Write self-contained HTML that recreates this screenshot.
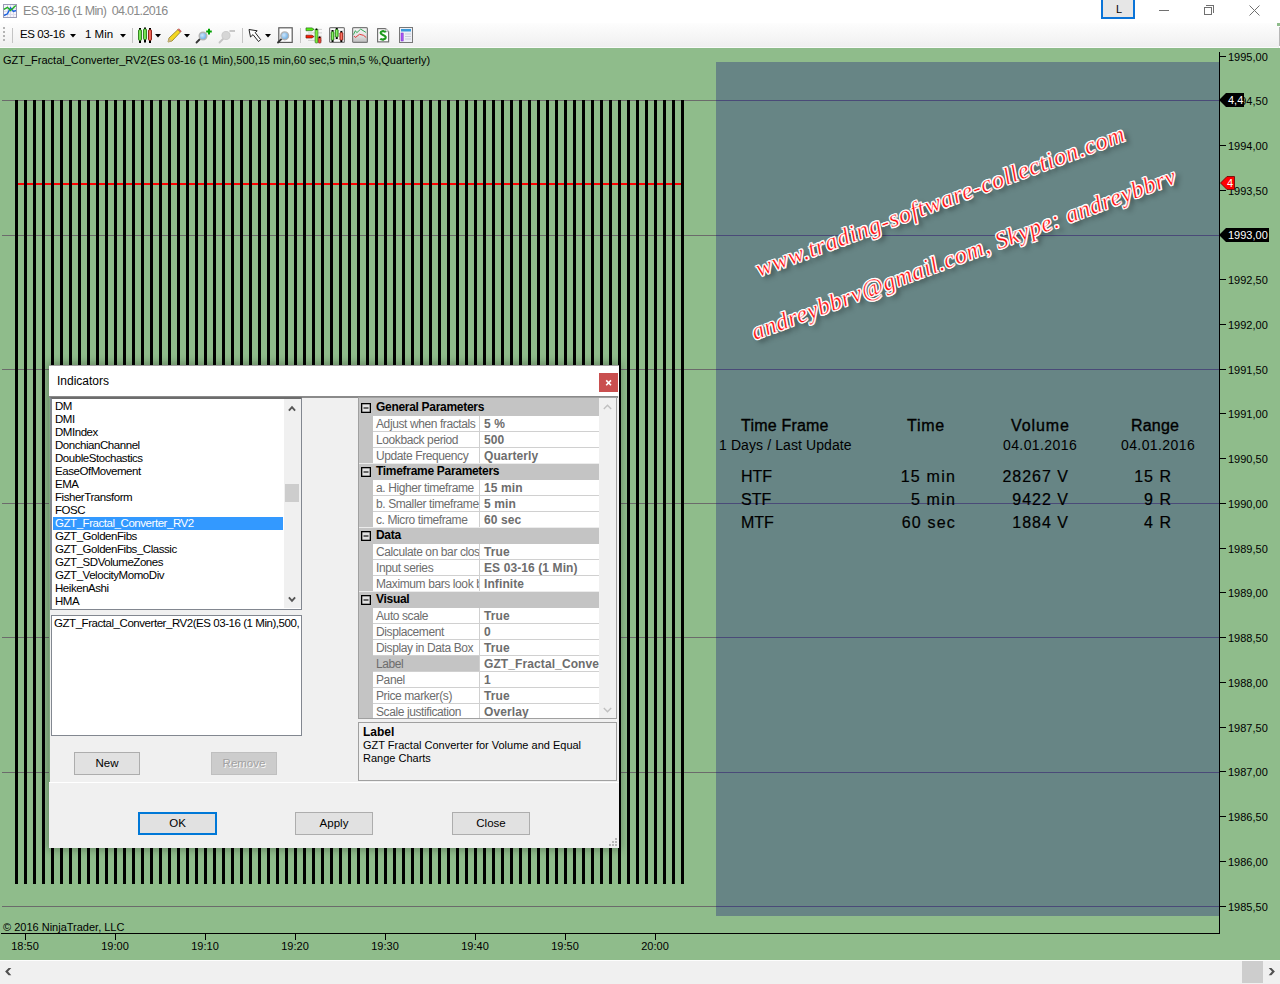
<!DOCTYPE html><html><head><meta charset="utf-8"><style>
*{margin:0;padding:0;box-sizing:border-box}
html,body{width:1280px;height:984px;overflow:hidden;background:#fff;font-family:"Liberation Sans", sans-serif;position:relative}
.a{position:absolute}
.t{position:absolute;white-space:pre;line-height:1}
</style></head><body><div class="a" style="left:0;top:0;width:1280px;height:22px;background:#fff"></div>
<svg class="a" style="left:3px;top:4px" width="14" height="14" viewBox="0 0 14 14">
<rect x="0.5" y="0.5" width="13" height="13" fill="#f6f4fc" stroke="#9a9cb6"/>
<path d="M1 4.5H13M1 7.5H13M1 10.5H13M4.5 1V13M7.5 1V13M10.5 1V13" stroke="#dcdcea" stroke-width="1"/>
<path d="M1 11.5 L4.5 9.8 L6 6.6 L7.5 3.8 L10.4 7.4 L13 6.5" stroke="#1a62e0" stroke-width="1.4" fill="none"/>
<path d="M0.9 5.4 L4.5 3.3 L7.5 6.5 L12.8 1.4" stroke="#20b020" stroke-width="1.4" fill="none"/>
</svg>
<div class="t" style="left:23px;top:5.4px;font-size:12.5px;letter-spacing:-0.7px;color:#8a8a8a">ES 03-16 (1 Min)  04.01.2016</div>
<div class="a" style="left:1101px;top:-2px;width:34px;height:21px;border:2px solid #0a74d8;background:#e6e6e6"></div>
<div class="t" style="left:1116px;top:4px;font-size:11px;color:#000">L</div>
<div class="a" style="left:1159px;top:10px;width:10px;height:1px;background:#707070"></div>
<div class="a" style="left:1204px;top:7px;width:8px;height:8px;border:1px solid #707070"></div>
<div class="a" style="left:1206px;top:5px;width:8px;height:8px;border-top:1px solid #707070;border-right:1px solid #707070"></div>
<svg class="a" style="left:1249px;top:5px" width="11" height="11"><path d="M0.5 0.5L10.5 10.5M10.5 0.5L0.5 10.5" stroke="#707070" stroke-width="1"/></svg>
<div class="a" style="left:0;top:23px;width:1279px;height:25px;background:linear-gradient(#fdfdfd,#f5f5f5 60%,#eeeeee);border-top-left-radius:3px"></div>
<div class="a" style="left:0;top:47px;width:1278px;height:1px;background:#fafafa"></div>
<div class="a" style="left:1279px;top:27px;width:1px;height:19px;background:#b8b8b8"></div>
<div class="a" style="left:1277px;top:23px;width:3px;height:3px;background:#8fbc8b"></div>
<div class="a" style="left:3px;top:27px;width:2px;height:2px;background:#b4b4b4"></div>
<div class="a" style="left:3px;top:31px;width:2px;height:2px;background:#b4b4b4"></div>
<div class="a" style="left:3px;top:35px;width:2px;height:2px;background:#b4b4b4"></div>
<div class="a" style="left:3px;top:39px;width:2px;height:2px;background:#b4b4b4"></div>
<div class="a" style="left:12px;top:28px;width:1px;height:15px;background:#c4c4c4"></div>
<div class="a" style="left:132px;top:28px;width:1px;height:15px;background:#c4c4c4"></div>
<div class="a" style="left:242px;top:28px;width:1px;height:15px;background:#c4c4c4"></div>
<div class="a" style="left:300px;top:28px;width:1px;height:15px;background:#c4c4c4"></div>
<div class="t" style="left:20px;top:29px;font-size:11.5px;letter-spacing:-0.4px;color:#000">ES 03-16</div>
<div class="t" style="left:85px;top:29px;font-size:11.5px;color:#000">1 Min</div>
<svg class="a" style="left:70px;top:34px" width="6" height="4"><path d="M0 0H6L3 3.5Z" fill="#000"/></svg>
<svg class="a" style="left:120px;top:34px" width="6" height="4"><path d="M0 0H6L3 3.5Z" fill="#000"/></svg>
<svg class="a" style="left:154.5px;top:34px" width="6" height="4"><path d="M0 0H6L3 3.5Z" fill="#000"/></svg>
<svg class="a" style="left:184px;top:34px" width="6" height="4"><path d="M0 0H6L3 3.5Z" fill="#000"/></svg>
<svg class="a" style="left:265px;top:34px" width="6" height="4"><path d="M0 0H6L3 3.5Z" fill="#000"/></svg>
<svg class="a" style="left:137px;top:27px" width="16" height="17" viewBox="0 0 16 17">
<defs><linearGradient id="cg" x1="0" x2="1"><stop offset="0" stop-color="#3fc21a"/><stop offset="0.45" stop-color="#8ef56a"/><stop offset="1" stop-color="#3fbf1a"/></linearGradient>
<linearGradient id="cr" x1="0" x2="1"><stop offset="0" stop-color="#e02a1a"/><stop offset="0.45" stop-color="#ff8a7a"/><stop offset="1" stop-color="#d8281a"/></linearGradient></defs>
<path d="M3 1V16M8 0.5V15.5M13 1V16" stroke="#000" stroke-width="2"/>
<rect x="1.5" y="2.8" width="3" height="10.5" rx="0.8" fill="url(#cg)" stroke="#2a7a1a" stroke-width="0.9"/>
<rect x="6.5" y="2" width="3" height="10.5" rx="0.8" fill="url(#cg)" stroke="#2a7a1a" stroke-width="0.9"/>
<rect x="11.5" y="2.8" width="3" height="10.5" rx="0.8" fill="url(#cr)" stroke="#8a1a10" stroke-width="0.9"/>
</svg>
<svg class="a" style="left:167px;top:28px" width="15" height="15" viewBox="0 0 15 15">
<path d="M1 14 L2 10 L11 1.5 L13.5 4 L5 13 Z" fill="#f5d820" stroke="#8a7a20" stroke-width="0.8"/>
<path d="M11 1.5 L13.5 4 L14.3 3.2 L11.8 0.7Z" fill="#e66" stroke="#a44" stroke-width="0.6"/>
<path d="M1 14 L2 10 L5 13Z" fill="#c9b48a"/>
</svg>
<svg class="a" style="left:195px;top:28px" width="18" height="16" viewBox="0 0 18 16">
<defs><radialGradient id="mg" cx="0.4" cy="0.4" r="0.6"><stop offset="0" stop-color="#cfe6fb"/><stop offset="1" stop-color="#6aaee6"/></radialGradient></defs>
<line x1="1.5" y1="14.5" x2="5" y2="11" stroke="#333" stroke-width="1.8" stroke-linecap="round"/>
<circle cx="8" cy="8" r="3.8" fill="url(#mg)" stroke="#b4b4b4" stroke-width="1.4"/>
<path d="M14 0.8V6.4M11.2 3.6H16.8" stroke="#00a000" stroke-width="2"/>
</svg>
<svg class="a" style="left:218px;top:28px" width="18" height="16" viewBox="0 0 18 16">
<line x1="1.5" y1="14.5" x2="5" y2="11" stroke="#c4c4c4" stroke-width="1.8" stroke-linecap="round"/>
<circle cx="8" cy="7.5" r="4" fill="#d6d6d6" stroke="#cdcdcd" stroke-width="1.2"/>
<path d="M11.5 3H17" stroke="#c8c8c8" stroke-width="2"/>
</svg>
<svg class="a" style="left:247px;top:28px" width="16" height="16" viewBox="0 0 16 16">
<path d="M2 1.5 L3.5 9 L6 6.6 L11.6 13.6 L13.6 11.6 L8.2 4.6 L10.2 2.8 Z" fill="#fff" stroke="#222" stroke-width="1" stroke-linejoin="round"/>
</svg>
<svg class="a" style="left:277px;top:27px" width="16" height="17" viewBox="0 0 16 17">
<rect x="1.8" y="0.8" width="13.4" height="14.6" fill="#fff" stroke="#5a5a5a" stroke-width="1.2"/>
<line x1="1" y1="15.5" x2="4.8" y2="11.7" stroke="#333" stroke-width="1.8" stroke-linecap="round"/>
<circle cx="7.7" cy="8.8" r="3.9" fill="url(#mg)" stroke="#b4b4b4" stroke-width="1.4"/>
</svg>
<svg class="a" style="left:305px;top:27px" width="17" height="17" viewBox="0 0 17 17">
<path d="M9 2.4H17M3 5.9H17M9 9.3H17M3 13.4H17" stroke="#cfcfcf" stroke-width="1"/>
<path d="M1 0.9H7L9 2.3L7 3.7H1Z" fill="#55ee11" stroke="#2a6a1a" stroke-width="0.7"/>
<path d="M1 8.2H7L9 9.6L7 11H1Z" fill="#ff1a00" stroke="#6a1a10" stroke-width="0.7"/>
<rect x="10.1" y="2" width="2.8" height="14" rx="1" fill="#7af03a" stroke="#3a7a2a" stroke-width="0.7"/>
<rect x="13.3" y="10" width="2.7" height="6" rx="0.8" fill="#f24a3a" stroke="#7a2a20" stroke-width="0.7"/>
<circle cx="11.5" cy="2.3" r="0.9" fill="#000"/><circle cx="14.6" cy="10.3" r="0.9" fill="#000"/>
</svg>
<svg class="a" style="left:329px;top:27px" width="16" height="16" viewBox="0 0 16 16">
<rect x="0.6" y="0.6" width="14.8" height="14.8" rx="1" fill="#fafafa" stroke="#7a7a7a" stroke-width="1.2"/>
<path d="M1.5 3.5H14.5M1.5 6.5H14.5M1.5 9.5H14.5M1.5 12.5H14.5" stroke="#c8c8c8" stroke-width="0.8" stroke-dasharray="1 1"/>
<path d="M3.55 3V15M7.75 1V12M12.35 4V15" stroke="#000" stroke-width="2"/>
<rect x="2.2" y="4.7" width="2.7" height="8.4" rx="0.8" fill="url(#cg)" stroke="#2a7a1a" stroke-width="0.7"/>
<rect x="6.3" y="2.5" width="2.9" height="7.5" rx="0.8" fill="url(#cg)" stroke="#2a7a1a" stroke-width="0.7"/>
<rect x="10.9" y="5.6" width="2.9" height="7.5" rx="0.8" fill="url(#cr)" stroke="#8a1a10" stroke-width="0.7"/>
</svg>
<svg class="a" style="left:352px;top:27px" width="16" height="16" viewBox="0 0 16 16">
<defs><linearGradient id="g1" x1="0" y1="0" x2="0" y2="1"><stop offset="0" stop-color="#f6f6f6"/><stop offset="0.5" stop-color="#e4e4e4"/><stop offset="1" stop-color="#bdbdbd"/></linearGradient></defs>
<rect x="0.6" y="0.6" width="14.8" height="14.8" rx="1" fill="url(#g1)" stroke="#7a7a7a" stroke-width="1.2"/>
<path d="M1.5 7.6 L3.4 3.7 L4.8 5.7 L8.7 2.1 L13.9 5.4" stroke="#3aaa5a" stroke-width="1" fill="none"/>
<path d="M2.2 9 L3.4 10.5 L7.5 7.3 L11.5 8.3 L14.2 10.5" stroke="#e23a3a" stroke-width="1" fill="none"/>
</svg>
<svg class="a" style="left:377px;top:28px" width="13" height="15" viewBox="0 0 13 15">
<path d="M0.6 0.6H8.6L11.6 3.6V13.9H0.6Z" fill="#fff" stroke="#707070" stroke-width="1.2" stroke-linejoin="round"/>
<path d="M8.6 0.6V3.6H11.6" fill="#e8e8e8" stroke="#9a9a9a" stroke-width="0.6"/>
<path d="M8.6 4.4 C8 2.9 3.6 2.6 3.6 5.1 C3.6 7.3 8.7 6.6 8.7 9.3 C8.7 11.9 4.2 11.9 3.3 10.6" stroke="#1e9a1e" stroke-width="2.1" fill="none"/>
<path d="M6.1 2.2V3.4M6.1 11.2V12.4" stroke="#1e9a1e" stroke-width="1.6"/>
</svg>
<svg class="a" style="left:399px;top:27px" width="14" height="16" viewBox="0 0 14 16">
<rect x="0.5" y="0.5" width="13" height="15" fill="#eef0f6" stroke="#777"/>
<rect x="2" y="2" width="10" height="2.5" fill="#3a9ad9"/>
<rect x="2" y="6" width="2.2" height="8" fill="#a855f7" stroke="#7733bb" stroke-width="0.5"/>
<path d="M6 7H12M6 9.5H12M6 12H12" stroke="#c8ccd8" stroke-width="1"/>
</svg>
<div class="a" style="left:0;top:48px;width:1280px;height:912px;background:#8fbc8b"></div>
<div class="t" style="left:3px;top:55px;font-size:11px;color:#000">GZT_Fractal_Converter_RV2(ES 03-16 (1 Min),500,15 min,60 sec,5 min,5 %,Quarterly)</div>
<div class="a" style="left:716px;top:62px;width:503px;height:854px;background:#678585"></div>
<div class="a" style="left:2px;top:100px;width:714px;height:1px;background:#6b6b6b"></div>
<div class="a" style="left:716px;top:100px;width:503px;height:1px;background:#4a4a78"></div>
<div class="a" style="left:2px;top:235px;width:714px;height:1px;background:#6b6b6b"></div>
<div class="a" style="left:716px;top:235px;width:503px;height:1px;background:#4a4a78"></div>
<div class="a" style="left:2px;top:369px;width:714px;height:1px;background:#6b6b6b"></div>
<div class="a" style="left:716px;top:369px;width:503px;height:1px;background:#4a4a78"></div>
<div class="a" style="left:2px;top:503px;width:714px;height:1px;background:#6b6b6b"></div>
<div class="a" style="left:716px;top:503px;width:503px;height:1px;background:#4a4a78"></div>
<div class="a" style="left:2px;top:637px;width:714px;height:1px;background:#6b6b6b"></div>
<div class="a" style="left:716px;top:637px;width:503px;height:1px;background:#4a4a78"></div>
<div class="a" style="left:2px;top:772px;width:714px;height:1px;background:#6b6b6b"></div>
<div class="a" style="left:716px;top:772px;width:503px;height:1px;background:#4a4a78"></div>
<div class="a" style="left:2px;top:906px;width:714px;height:1px;background:#6b6b6b"></div>
<div class="a" style="left:716px;top:906px;width:503px;height:1px;background:#4a4a78"></div>
<div class="a" style="left:17px;top:183px;width:665px;height:2px;background:#ff0000"></div>
<div class="a" style="left:15px;top:100px;width:3px;height:784px;background:#000"></div><div class="a" style="left:24px;top:100px;width:3px;height:784px;background:#000"></div><div class="a" style="left:33px;top:100px;width:3px;height:784px;background:#000"></div><div class="a" style="left:42px;top:100px;width:3px;height:784px;background:#000"></div><div class="a" style="left:51px;top:100px;width:3px;height:784px;background:#000"></div><div class="a" style="left:60px;top:100px;width:3px;height:784px;background:#000"></div><div class="a" style="left:69px;top:100px;width:3px;height:784px;background:#000"></div><div class="a" style="left:78px;top:100px;width:3px;height:784px;background:#000"></div><div class="a" style="left:87px;top:100px;width:3px;height:784px;background:#000"></div><div class="a" style="left:96px;top:100px;width:3px;height:784px;background:#000"></div><div class="a" style="left:105px;top:100px;width:3px;height:784px;background:#000"></div><div class="a" style="left:114px;top:100px;width:3px;height:784px;background:#000"></div><div class="a" style="left:123px;top:100px;width:3px;height:784px;background:#000"></div><div class="a" style="left:132px;top:100px;width:3px;height:784px;background:#000"></div><div class="a" style="left:141px;top:100px;width:3px;height:784px;background:#000"></div><div class="a" style="left:150px;top:100px;width:3px;height:784px;background:#000"></div><div class="a" style="left:159px;top:100px;width:3px;height:784px;background:#000"></div><div class="a" style="left:168px;top:100px;width:3px;height:784px;background:#000"></div><div class="a" style="left:177px;top:100px;width:3px;height:784px;background:#000"></div><div class="a" style="left:186px;top:100px;width:3px;height:784px;background:#000"></div><div class="a" style="left:195px;top:100px;width:3px;height:784px;background:#000"></div><div class="a" style="left:204px;top:100px;width:3px;height:784px;background:#000"></div><div class="a" style="left:213px;top:100px;width:3px;height:784px;background:#000"></div><div class="a" style="left:222px;top:100px;width:3px;height:784px;background:#000"></div><div class="a" style="left:231px;top:100px;width:3px;height:784px;background:#000"></div><div class="a" style="left:240px;top:100px;width:3px;height:784px;background:#000"></div><div class="a" style="left:249px;top:100px;width:3px;height:784px;background:#000"></div><div class="a" style="left:258px;top:100px;width:3px;height:784px;background:#000"></div><div class="a" style="left:267px;top:100px;width:3px;height:784px;background:#000"></div><div class="a" style="left:276px;top:100px;width:3px;height:784px;background:#000"></div><div class="a" style="left:285px;top:100px;width:3px;height:784px;background:#000"></div><div class="a" style="left:294px;top:100px;width:3px;height:784px;background:#000"></div><div class="a" style="left:303px;top:100px;width:3px;height:784px;background:#000"></div><div class="a" style="left:312px;top:100px;width:3px;height:784px;background:#000"></div><div class="a" style="left:321px;top:100px;width:3px;height:784px;background:#000"></div><div class="a" style="left:330px;top:100px;width:3px;height:784px;background:#000"></div><div class="a" style="left:339px;top:100px;width:3px;height:784px;background:#000"></div><div class="a" style="left:348px;top:100px;width:3px;height:784px;background:#000"></div><div class="a" style="left:357px;top:100px;width:3px;height:784px;background:#000"></div><div class="a" style="left:366px;top:100px;width:3px;height:784px;background:#000"></div><div class="a" style="left:375px;top:100px;width:3px;height:784px;background:#000"></div><div class="a" style="left:384px;top:100px;width:3px;height:784px;background:#000"></div><div class="a" style="left:393px;top:100px;width:3px;height:784px;background:#000"></div><div class="a" style="left:402px;top:100px;width:3px;height:784px;background:#000"></div><div class="a" style="left:411px;top:100px;width:3px;height:784px;background:#000"></div><div class="a" style="left:420px;top:100px;width:3px;height:784px;background:#000"></div><div class="a" style="left:429px;top:100px;width:3px;height:784px;background:#000"></div><div class="a" style="left:438px;top:100px;width:3px;height:784px;background:#000"></div><div class="a" style="left:447px;top:100px;width:3px;height:784px;background:#000"></div><div class="a" style="left:456px;top:100px;width:3px;height:784px;background:#000"></div><div class="a" style="left:465px;top:100px;width:3px;height:784px;background:#000"></div><div class="a" style="left:474px;top:100px;width:3px;height:784px;background:#000"></div><div class="a" style="left:483px;top:100px;width:3px;height:784px;background:#000"></div><div class="a" style="left:492px;top:100px;width:3px;height:784px;background:#000"></div><div class="a" style="left:501px;top:100px;width:3px;height:784px;background:#000"></div><div class="a" style="left:510px;top:100px;width:3px;height:784px;background:#000"></div><div class="a" style="left:519px;top:100px;width:3px;height:784px;background:#000"></div><div class="a" style="left:528px;top:100px;width:3px;height:784px;background:#000"></div><div class="a" style="left:537px;top:100px;width:3px;height:784px;background:#000"></div><div class="a" style="left:546px;top:100px;width:3px;height:784px;background:#000"></div><div class="a" style="left:555px;top:100px;width:3px;height:784px;background:#000"></div><div class="a" style="left:564px;top:100px;width:3px;height:784px;background:#000"></div><div class="a" style="left:573px;top:100px;width:3px;height:784px;background:#000"></div><div class="a" style="left:582px;top:100px;width:3px;height:784px;background:#000"></div><div class="a" style="left:591px;top:100px;width:3px;height:784px;background:#000"></div><div class="a" style="left:600px;top:100px;width:3px;height:784px;background:#000"></div><div class="a" style="left:609px;top:100px;width:3px;height:784px;background:#000"></div><div class="a" style="left:618px;top:100px;width:3px;height:784px;background:#000"></div><div class="a" style="left:627px;top:100px;width:3px;height:784px;background:#000"></div><div class="a" style="left:636px;top:100px;width:3px;height:784px;background:#000"></div><div class="a" style="left:645px;top:100px;width:3px;height:784px;background:#000"></div><div class="a" style="left:654px;top:100px;width:3px;height:784px;background:#000"></div><div class="a" style="left:663px;top:100px;width:3px;height:784px;background:#000"></div><div class="a" style="left:672px;top:100px;width:3px;height:784px;background:#000"></div><div class="a" style="left:681px;top:100px;width:3px;height:784px;background:#000"></div>
<div class="a" style="left:1219px;top:52px;width:1px;height:882px;background:#000"></div>
<div class="a" style="left:1px;top:933px;width:1219px;height:1px;background:#000"></div>
<div class="a" style="left:1220px;top:56px;width:6px;height:1px;background:#000"></div>
<div class="t" style="left:1228px;top:52px;font-size:11px;color:#000">1995,00</div>
<div class="a" style="left:1220px;top:100px;width:6px;height:1px;background:#000"></div>
<div class="t" style="left:1228px;top:96px;font-size:11px;color:#000">1994,50</div>
<div class="a" style="left:1220px;top:145px;width:6px;height:1px;background:#000"></div>
<div class="t" style="left:1228px;top:141px;font-size:11px;color:#000">1994,00</div>
<div class="a" style="left:1220px;top:190px;width:6px;height:1px;background:#000"></div>
<div class="t" style="left:1228px;top:186px;font-size:11px;color:#000">1993,50</div>
<div class="a" style="left:1220px;top:234px;width:6px;height:1px;background:#000"></div>
<div class="t" style="left:1228px;top:230px;font-size:11px;color:#000">1993,00</div>
<div class="a" style="left:1220px;top:279px;width:6px;height:1px;background:#000"></div>
<div class="t" style="left:1228px;top:275px;font-size:11px;color:#000">1992,50</div>
<div class="a" style="left:1220px;top:324px;width:6px;height:1px;background:#000"></div>
<div class="t" style="left:1228px;top:320px;font-size:11px;color:#000">1992,00</div>
<div class="a" style="left:1220px;top:369px;width:6px;height:1px;background:#000"></div>
<div class="t" style="left:1228px;top:365px;font-size:11px;color:#000">1991,50</div>
<div class="a" style="left:1220px;top:413px;width:6px;height:1px;background:#000"></div>
<div class="t" style="left:1228px;top:409px;font-size:11px;color:#000">1991,00</div>
<div class="a" style="left:1220px;top:458px;width:6px;height:1px;background:#000"></div>
<div class="t" style="left:1228px;top:454px;font-size:11px;color:#000">1990,50</div>
<div class="a" style="left:1220px;top:503px;width:6px;height:1px;background:#000"></div>
<div class="t" style="left:1228px;top:499px;font-size:11px;color:#000">1990,00</div>
<div class="a" style="left:1220px;top:548px;width:6px;height:1px;background:#000"></div>
<div class="t" style="left:1228px;top:544px;font-size:11px;color:#000">1989,50</div>
<div class="a" style="left:1220px;top:592px;width:6px;height:1px;background:#000"></div>
<div class="t" style="left:1228px;top:588px;font-size:11px;color:#000">1989,00</div>
<div class="a" style="left:1220px;top:637px;width:6px;height:1px;background:#000"></div>
<div class="t" style="left:1228px;top:633px;font-size:11px;color:#000">1988,50</div>
<div class="a" style="left:1220px;top:682px;width:6px;height:1px;background:#000"></div>
<div class="t" style="left:1228px;top:678px;font-size:11px;color:#000">1988,00</div>
<div class="a" style="left:1220px;top:727px;width:6px;height:1px;background:#000"></div>
<div class="t" style="left:1228px;top:723px;font-size:11px;color:#000">1987,50</div>
<div class="a" style="left:1220px;top:771px;width:6px;height:1px;background:#000"></div>
<div class="t" style="left:1228px;top:767px;font-size:11px;color:#000">1987,00</div>
<div class="a" style="left:1220px;top:816px;width:6px;height:1px;background:#000"></div>
<div class="t" style="left:1228px;top:812px;font-size:11px;color:#000">1986,50</div>
<div class="a" style="left:1220px;top:861px;width:6px;height:1px;background:#000"></div>
<div class="t" style="left:1228px;top:857px;font-size:11px;color:#000">1986,00</div>
<div class="a" style="left:1220px;top:906px;width:6px;height:1px;background:#000"></div>
<div class="t" style="left:1228px;top:902px;font-size:11px;color:#000">1985,50</div>
<div class="a" style="left:25px;top:934px;width:1px;height:6px;background:#000"></div>
<div class="t" style="left:11px;top:941px;width:28px;text-align:center;font-size:11px;color:#000">18:50</div>
<div class="a" style="left:115px;top:934px;width:1px;height:6px;background:#000"></div>
<div class="t" style="left:101px;top:941px;width:28px;text-align:center;font-size:11px;color:#000">19:00</div>
<div class="a" style="left:205px;top:934px;width:1px;height:6px;background:#000"></div>
<div class="t" style="left:191px;top:941px;width:28px;text-align:center;font-size:11px;color:#000">19:10</div>
<div class="a" style="left:295px;top:934px;width:1px;height:6px;background:#000"></div>
<div class="t" style="left:281px;top:941px;width:28px;text-align:center;font-size:11px;color:#000">19:20</div>
<div class="a" style="left:385px;top:934px;width:1px;height:6px;background:#000"></div>
<div class="t" style="left:371px;top:941px;width:28px;text-align:center;font-size:11px;color:#000">19:30</div>
<div class="a" style="left:475px;top:934px;width:1px;height:6px;background:#000"></div>
<div class="t" style="left:461px;top:941px;width:28px;text-align:center;font-size:11px;color:#000">19:40</div>
<div class="a" style="left:565px;top:934px;width:1px;height:6px;background:#000"></div>
<div class="t" style="left:551px;top:941px;width:28px;text-align:center;font-size:11px;color:#000">19:50</div>
<div class="a" style="left:655px;top:934px;width:1px;height:6px;background:#000"></div>
<div class="t" style="left:641px;top:941px;width:28px;text-align:center;font-size:11px;color:#000">20:00</div>
<div class="t" style="left:3px;top:922px;font-size:11px;color:#000">© 2016 NinjaTrader, LLC</div>
<svg class="a" style="left:1219px;top:93px" width="26" height="14"><path d="M0 7L7 0H25V14H7Z" fill="#000"/></svg>
<div class="t" style="left:1228px;top:95px;font-size:11px;color:#fff">4,4</div>
<svg class="a" style="left:1220px;top:176px" width="16" height="14"><path d="M0.5 7L7 0.5H14.5V13.5H7Z" fill="#f00" stroke="#600" stroke-width="0.8"/></svg>
<div class="t" style="left:1227px;top:178px;font-size:11px;color:#fff">4</div>
<svg class="a" style="left:1219px;top:228px" width="51" height="14"><path d="M0 7L7 0H50V14H7Z" fill="#000"/></svg>
<div class="t" style="left:1228px;top:230px;font-size:11px;color:#fff">1993,00</div>
<div class="a" style="left:0;top:960px;width:1280px;height:24px;background:#f0f0f0"></div>
<div class="a" style="left:1242px;top:961px;width:21px;height:22px;background:#cdcdcd"></div>
<div class="a" style="left:0;top:960px;width:1280px;height:1px;background:#fdfdfd"></div>
<svg class="a" style="left:4px;top:967px" width="9" height="9"><path d="M4.6 0.9H7.3L4 4.6L7.3 8.3H4.6L1.1 4.6Z" fill="#505050"/></svg>
<svg class="a" style="left:1267px;top:967px" width="9" height="9"><path d="M4.4 0.9H1.7L5 4.6L1.7 8.3H4.4L7.9 4.6Z" fill="#505050"/></svg>
<div class="t" style="left:741px;top:418px;font-size:16px;color:#000;font-weight:normal;letter-spacing:0.2px;-webkit-text-stroke:0.35px #000">Time Frame</div>
<div class="t" style="left:907px;top:418px;font-size:16px;color:#000;font-weight:normal;letter-spacing:0.2px;-webkit-text-stroke:0.35px #000;letter-spacing:0.7px">Time</div>
<div class="t" style="left:1011px;top:418px;font-size:16px;color:#000;font-weight:normal;letter-spacing:0.2px;-webkit-text-stroke:0.35px #000;letter-spacing:0.9px">Volume</div>
<div class="t" style="left:1131px;top:418px;font-size:16px;color:#000;font-weight:normal;letter-spacing:0.2px;-webkit-text-stroke:0.35px #000">Range</div>
<div class="t" style="left:719px;top:438px;font-size:14px;color:#000;letter-spacing:0.1px">1 Days / Last Update</div>
<div class="t" style="left:1003px;top:438px;font-size:14px;color:#000;letter-spacing:0.4px">04.01.2016</div>
<div class="t" style="left:1121px;top:438px;font-size:14px;color:#000;letter-spacing:0.4px">04.01.2016</div>
<div class="t" style="left:741px;top:469px;font-size:16px;color:#000;-webkit-text-stroke:0.2px #000">HTF</div>
<div class="t" style="left:856px;top:469px;width:100px;text-align:right;font-size:16px;color:#000;letter-spacing:1.2px;-webkit-text-stroke:0.2px #000">15 min</div>
<div class="t" style="left:969px;top:469px;width:100px;text-align:right;font-size:16px;color:#000;letter-spacing:1px;-webkit-text-stroke:0.2px #000">28267 V</div>
<div class="t" style="left:1072px;top:469px;width:100px;text-align:right;font-size:16px;color:#000;letter-spacing:1px;-webkit-text-stroke:0.2px #000">15 R</div>
<div class="t" style="left:741px;top:492px;font-size:16px;color:#000;-webkit-text-stroke:0.2px #000">STF</div>
<div class="t" style="left:856px;top:492px;width:100px;text-align:right;font-size:16px;color:#000;letter-spacing:1.2px;-webkit-text-stroke:0.2px #000">5 min</div>
<div class="t" style="left:969px;top:492px;width:100px;text-align:right;font-size:16px;color:#000;letter-spacing:1px;-webkit-text-stroke:0.2px #000">9422 V</div>
<div class="t" style="left:1072px;top:492px;width:100px;text-align:right;font-size:16px;color:#000;letter-spacing:1px;-webkit-text-stroke:0.2px #000">9 R</div>
<div class="t" style="left:741px;top:515px;font-size:16px;color:#000;-webkit-text-stroke:0.2px #000">MTF</div>
<div class="t" style="left:856px;top:515px;width:100px;text-align:right;font-size:16px;color:#000;letter-spacing:1.2px;-webkit-text-stroke:0.2px #000">60 sec</div>
<div class="t" style="left:969px;top:515px;width:100px;text-align:right;font-size:16px;color:#000;letter-spacing:1px;-webkit-text-stroke:0.2px #000">1884 V</div>
<div class="t" style="left:1072px;top:515px;width:100px;text-align:right;font-size:16px;color:#000;letter-spacing:1px;-webkit-text-stroke:0.2px #000">4 R</div>
<div class="t" style="left:759px;top:257px;font-size:24px;letter-spacing:0.9px;font-family:'Liberation Serif',serif;font-style:italic;color:#ff0c0c;-webkit-text-stroke:0.3px #fff;text-shadow:0 0 1px #fff,1px 0 0 #fff,-1px 0 0 #fff,0 1px 0 #fff,0 -1px 0 #fff,1px 1px 0 #fff,-1px -1px 0 #fff,1px -1px 0 #fff,-1px 1px 0 #fff,3px 4px 5px rgba(0,0,0,0.6);transform-origin:0 20px;transform:rotate(-20.4deg)">www.trading-software-collection.com</div>
<div class="t" style="left:755px;top:320px;font-size:24px;letter-spacing:0.7px;font-family:'Liberation Serif',serif;font-style:italic;color:#ff0c0c;-webkit-text-stroke:0.3px #fff;text-shadow:0 0 1px #fff,1px 0 0 #fff,-1px 0 0 #fff,0 1px 0 #fff,0 -1px 0 #fff,1px 1px 0 #fff,-1px -1px 0 #fff,1px -1px 0 #fff,-1px 1px 0 #fff,3px 4px 5px rgba(0,0,0,0.6);transform-origin:0 20px;transform:rotate(-20.4deg)">andreybbrv@gmail.com, Skype: andreybbrv</div>
<div class="a" style="left:49px;top:365px;width:570px;height:483px;background:#f0f0f0;box-shadow:0 0 8px 2px rgba(0,0,0,0.28)"></div>
<div class="a" style="left:49px;top:365px;width:570px;height:31px;background:#fff;border-top:1px solid #a4a4a4"></div>
<div class="t" style="left:57px;top:375px;font-size:12px;color:#000">Indicators</div>
<div class="a" style="left:599px;top:373px;width:19px;height:19px;background:#c94f4f"></div>
<svg class="a" style="left:605px;top:379px" width="8" height="8"><path d="M1.2 1.4L6 6.2M6 1.4L1.2 6.2" stroke="#fff" stroke-width="1.6"/></svg>
<div class="a" style="left:49px;top:396px;width:569px;height:2px;background:#8a8a8a"></div>
<div class="a" style="left:49px;top:398px;width:1px;height:384px;background:#7fa67b"></div>
<div class="a" style="left:50px;top:397px;width:252px;height:213px;background:#fff;border:1px solid #828790;border-left:2px solid #828790;border-top:2px solid #6d6d6d"></div>
<div class="t" style="left:55px;top:400.8px;font-size:11.5px;color:#000;letter-spacing:-0.45px">DM</div>
<div class="t" style="left:55px;top:413.8px;font-size:11.5px;color:#000;letter-spacing:-0.45px">DMI</div>
<div class="t" style="left:55px;top:426.8px;font-size:11.5px;color:#000;letter-spacing:-0.45px">DMIndex</div>
<div class="t" style="left:55px;top:439.8px;font-size:11.5px;color:#000;letter-spacing:-0.45px">DonchianChannel</div>
<div class="t" style="left:55px;top:452.8px;font-size:11.5px;color:#000;letter-spacing:-0.45px">DoubleStochastics</div>
<div class="t" style="left:55px;top:465.8px;font-size:11.5px;color:#000;letter-spacing:-0.45px">EaseOfMovement</div>
<div class="t" style="left:55px;top:478.8px;font-size:11.5px;color:#000;letter-spacing:-0.45px">EMA</div>
<div class="t" style="left:55px;top:491.8px;font-size:11.5px;color:#000;letter-spacing:-0.45px">FisherTransform</div>
<div class="t" style="left:55px;top:504.8px;font-size:11.5px;color:#000;letter-spacing:-0.45px">FOSC</div>
<div class="a" style="left:53px;top:517px;width:230px;height:13px;background:#3399ff"></div>
<div class="t" style="left:55px;top:517.8px;font-size:11.5px;color:#fff;letter-spacing:-0.45px">GZT_Fractal_Converter_RV2</div>
<div class="t" style="left:55px;top:530.8px;font-size:11.5px;color:#000;letter-spacing:-0.45px">GZT_GoldenFibs</div>
<div class="t" style="left:55px;top:543.8px;font-size:11.5px;color:#000;letter-spacing:-0.45px">GZT_GoldenFibs_Classic</div>
<div class="t" style="left:55px;top:556.8px;font-size:11.5px;color:#000;letter-spacing:-0.45px">GZT_SDVolumeZones</div>
<div class="t" style="left:55px;top:569.8px;font-size:11.5px;color:#000;letter-spacing:-0.45px">GZT_VelocityMomoDiv</div>
<div class="t" style="left:55px;top:582.8px;font-size:11.5px;color:#000;letter-spacing:-0.45px">HeikenAshi</div>
<div class="t" style="left:55px;top:595.8px;font-size:11.5px;color:#000;letter-spacing:-0.45px">HMA</div>
<div class="a" style="left:284px;top:399px;width:17px;height:209px;background:#f0f0f0"></div>
<div class="a" style="left:285px;top:484px;width:14px;height:18px;background:#cdcdcd"></div>
<svg class="a" style="left:288px;top:405px" width="8" height="7"><path d="M0.9 5.6L4 2.2L7.1 5.6" stroke="#555" stroke-width="1.9" fill="none"/></svg>
<svg class="a" style="left:288px;top:596px" width="8" height="7"><path d="M0.9 1.4L4 4.8L7.1 1.4" stroke="#555" stroke-width="1.9" fill="none"/></svg>
<div class="a" style="left:51px;top:615px;width:251px;height:121px;background:#fff;border:1px solid #828790"></div>
<div class="a" style="left:52px;top:616px;width:249px;height:119px;overflow:hidden"><div class="t" style="left:2px;top:1.8px;font-size:11.5px;color:#000;letter-spacing:-0.45px">GZT_Fractal_Converter_RV2(ES 03-16 (1 Min),500,</div></div>
<div class="a" style="left:74px;top:752px;width:66px;height:23px;background:#e1e1e1;border:1px solid #adadad"></div>
<div class="t" style="left:74px;top:758px;width:66px;text-align:center;font-size:11.5px;color:#000;">New</div>
<div class="a" style="left:211px;top:752px;width:66px;height:23px;background:#cccccc;border:1px solid #bfbfbf"></div>
<div class="t" style="left:211px;top:758px;width:66px;text-align:center;font-size:11.5px;color:#a2a2a2;text-shadow:1px 1px 0 #fafafa;">Remove</div>
<div class="a" style="left:49px;top:782px;width:570px;height:1px;background:#fff"></div>
<div class="a" style="left:138px;top:812px;width:79px;height:23px;background:#e1e1e1;border:2px solid #0078d7"></div>
<div class="t" style="left:138px;top:818px;width:79px;text-align:center;font-size:11.5px;color:#000;">OK</div>
<div class="a" style="left:295px;top:812px;width:78px;height:23px;background:#e1e1e1;border:1px solid #adadad"></div>
<div class="t" style="left:295px;top:818px;width:78px;text-align:center;font-size:11.5px;color:#000;">Apply</div>
<div class="a" style="left:452px;top:812px;width:78px;height:23px;background:#e1e1e1;border:1px solid #adadad"></div>
<div class="t" style="left:452px;top:818px;width:78px;text-align:center;font-size:11.5px;color:#000;">Close</div>
<div class="a" style="left:358px;top:397px;width:259px;height:322px;background:#f0f0f0;border:1px solid #a0a0a0"></div>
<div class="a" style="left:359px;top:398px;width:14px;height:320px;background:#c4c4c4"></div>
<div class="a" style="left:359px;top:398px;width:240px;height:18px;background:#c4c4c4"></div>
<svg class="a" style="left:361px;top:403px" width="10" height="10"><rect x="0.65" y="0.65" width="8.7" height="8.7" fill="#e2e2e2" stroke="#000" stroke-width="1.3"/><path d="M2.5 5H7.5" stroke="#000" stroke-width="1.1"/></svg>
<div class="t" style="left:376px;top:401px;font-size:12px;font-weight:bold;color:#000;letter-spacing:-0.3px">General Parameters</div>
<div class="a" style="left:373px;top:416px;width:106px;height:15px;background:#fff;overflow:hidden"><div class="t" style="left:3px;top:2.4px;font-size:12px;letter-spacing:-0.4px;color:#6d6d6d">Adjust when fractals</div></div>
<div class="a" style="left:480px;top:416px;width:119px;height:15px;background:#fff;overflow:hidden"><div class="t" style="left:4px;top:2px;font-size:12px;letter-spacing:0.1px;font-weight:bold;color:#6d6d6d">5 %</div></div>
<div class="a" style="left:373px;top:431px;width:226px;height:1px;background:#d0d0d0"></div>
<div class="a" style="left:479px;top:416px;width:1px;height:16px;background:#d0d0d0"></div>
<div class="a" style="left:373px;top:432px;width:106px;height:15px;background:#fff;overflow:hidden"><div class="t" style="left:3px;top:2.4px;font-size:12px;letter-spacing:-0.4px;color:#6d6d6d">Lookback period</div></div>
<div class="a" style="left:480px;top:432px;width:119px;height:15px;background:#fff;overflow:hidden"><div class="t" style="left:4px;top:2px;font-size:12px;letter-spacing:0.1px;font-weight:bold;color:#6d6d6d">500</div></div>
<div class="a" style="left:373px;top:447px;width:226px;height:1px;background:#d0d0d0"></div>
<div class="a" style="left:479px;top:432px;width:1px;height:16px;background:#d0d0d0"></div>
<div class="a" style="left:373px;top:448px;width:106px;height:15px;background:#fff;overflow:hidden"><div class="t" style="left:3px;top:2.4px;font-size:12px;letter-spacing:-0.4px;color:#6d6d6d">Update Frequency</div></div>
<div class="a" style="left:480px;top:448px;width:119px;height:15px;background:#fff;overflow:hidden"><div class="t" style="left:4px;top:2px;font-size:12px;letter-spacing:0.1px;font-weight:bold;color:#6d6d6d">Quarterly</div></div>
<div class="a" style="left:373px;top:463px;width:226px;height:1px;background:#d0d0d0"></div>
<div class="a" style="left:479px;top:448px;width:1px;height:16px;background:#d0d0d0"></div>
<div class="a" style="left:359px;top:464px;width:240px;height:16px;background:#c4c4c4"></div>
<div class="a" style="left:359px;top:463px;width:240px;height:1px;background:#ececec"></div>
<svg class="a" style="left:361px;top:467px" width="10" height="10"><rect x="0.65" y="0.65" width="8.7" height="8.7" fill="#e2e2e2" stroke="#000" stroke-width="1.3"/><path d="M2.5 5H7.5" stroke="#000" stroke-width="1.1"/></svg>
<div class="t" style="left:376px;top:465px;font-size:12px;font-weight:bold;color:#000;letter-spacing:-0.3px">Timeframe Parameters</div>
<div class="a" style="left:373px;top:480px;width:106px;height:15px;background:#fff;overflow:hidden"><div class="t" style="left:3px;top:2.4px;font-size:12px;letter-spacing:-0.4px;color:#6d6d6d">a. Higher timeframe</div></div>
<div class="a" style="left:480px;top:480px;width:119px;height:15px;background:#fff;overflow:hidden"><div class="t" style="left:4px;top:2px;font-size:12px;letter-spacing:0.1px;font-weight:bold;color:#6d6d6d">15 min</div></div>
<div class="a" style="left:373px;top:495px;width:226px;height:1px;background:#d0d0d0"></div>
<div class="a" style="left:479px;top:480px;width:1px;height:16px;background:#d0d0d0"></div>
<div class="a" style="left:373px;top:496px;width:106px;height:15px;background:#fff;overflow:hidden"><div class="t" style="left:3px;top:2.4px;font-size:12px;letter-spacing:-0.4px;color:#6d6d6d">b. Smaller timeframe</div></div>
<div class="a" style="left:480px;top:496px;width:119px;height:15px;background:#fff;overflow:hidden"><div class="t" style="left:4px;top:2px;font-size:12px;letter-spacing:0.1px;font-weight:bold;color:#6d6d6d">5 min</div></div>
<div class="a" style="left:373px;top:511px;width:226px;height:1px;background:#d0d0d0"></div>
<div class="a" style="left:479px;top:496px;width:1px;height:16px;background:#d0d0d0"></div>
<div class="a" style="left:373px;top:512px;width:106px;height:15px;background:#fff;overflow:hidden"><div class="t" style="left:3px;top:2.4px;font-size:12px;letter-spacing:-0.4px;color:#6d6d6d">c. Micro timeframe</div></div>
<div class="a" style="left:480px;top:512px;width:119px;height:15px;background:#fff;overflow:hidden"><div class="t" style="left:4px;top:2px;font-size:12px;letter-spacing:0.1px;font-weight:bold;color:#6d6d6d">60 sec</div></div>
<div class="a" style="left:373px;top:527px;width:226px;height:1px;background:#d0d0d0"></div>
<div class="a" style="left:479px;top:512px;width:1px;height:16px;background:#d0d0d0"></div>
<div class="a" style="left:359px;top:528px;width:240px;height:16px;background:#c4c4c4"></div>
<div class="a" style="left:359px;top:527px;width:240px;height:1px;background:#ececec"></div>
<svg class="a" style="left:361px;top:531px" width="10" height="10"><rect x="0.65" y="0.65" width="8.7" height="8.7" fill="#e2e2e2" stroke="#000" stroke-width="1.3"/><path d="M2.5 5H7.5" stroke="#000" stroke-width="1.1"/></svg>
<div class="t" style="left:376px;top:529px;font-size:12px;font-weight:bold;color:#000;letter-spacing:-0.3px">Data</div>
<div class="a" style="left:373px;top:544px;width:106px;height:15px;background:#fff;overflow:hidden"><div class="t" style="left:3px;top:2.4px;font-size:12px;letter-spacing:-0.4px;color:#6d6d6d">Calculate on bar close</div></div>
<div class="a" style="left:480px;top:544px;width:119px;height:15px;background:#fff;overflow:hidden"><div class="t" style="left:4px;top:2px;font-size:12px;letter-spacing:0.1px;font-weight:bold;color:#6d6d6d">True</div></div>
<div class="a" style="left:373px;top:559px;width:226px;height:1px;background:#d0d0d0"></div>
<div class="a" style="left:479px;top:544px;width:1px;height:16px;background:#d0d0d0"></div>
<div class="a" style="left:373px;top:560px;width:106px;height:15px;background:#fff;overflow:hidden"><div class="t" style="left:3px;top:2.4px;font-size:12px;letter-spacing:-0.4px;color:#6d6d6d">Input series</div></div>
<div class="a" style="left:480px;top:560px;width:119px;height:15px;background:#fff;overflow:hidden"><div class="t" style="left:4px;top:2px;font-size:12px;letter-spacing:0.1px;font-weight:bold;color:#6d6d6d">ES 03-16 (1 Min)</div></div>
<div class="a" style="left:373px;top:575px;width:226px;height:1px;background:#d0d0d0"></div>
<div class="a" style="left:479px;top:560px;width:1px;height:16px;background:#d0d0d0"></div>
<div class="a" style="left:373px;top:576px;width:106px;height:15px;background:#fff;overflow:hidden"><div class="t" style="left:3px;top:2.4px;font-size:12px;letter-spacing:-0.4px;color:#6d6d6d">Maximum bars look back</div></div>
<div class="a" style="left:480px;top:576px;width:119px;height:15px;background:#fff;overflow:hidden"><div class="t" style="left:4px;top:2px;font-size:12px;letter-spacing:0.1px;font-weight:bold;color:#6d6d6d">Infinite</div></div>
<div class="a" style="left:373px;top:591px;width:226px;height:1px;background:#d0d0d0"></div>
<div class="a" style="left:479px;top:576px;width:1px;height:16px;background:#d0d0d0"></div>
<div class="a" style="left:359px;top:592px;width:240px;height:16px;background:#c4c4c4"></div>
<div class="a" style="left:359px;top:591px;width:240px;height:1px;background:#ececec"></div>
<svg class="a" style="left:361px;top:595px" width="10" height="10"><rect x="0.65" y="0.65" width="8.7" height="8.7" fill="#e2e2e2" stroke="#000" stroke-width="1.3"/><path d="M2.5 5H7.5" stroke="#000" stroke-width="1.1"/></svg>
<div class="t" style="left:376px;top:593px;font-size:12px;font-weight:bold;color:#000;letter-spacing:-0.3px">Visual</div>
<div class="a" style="left:373px;top:608px;width:106px;height:15px;background:#fff;overflow:hidden"><div class="t" style="left:3px;top:2.4px;font-size:12px;letter-spacing:-0.4px;color:#6d6d6d">Auto scale</div></div>
<div class="a" style="left:480px;top:608px;width:119px;height:15px;background:#fff;overflow:hidden"><div class="t" style="left:4px;top:2px;font-size:12px;letter-spacing:0.1px;font-weight:bold;color:#6d6d6d">True</div></div>
<div class="a" style="left:373px;top:623px;width:226px;height:1px;background:#d0d0d0"></div>
<div class="a" style="left:479px;top:608px;width:1px;height:16px;background:#d0d0d0"></div>
<div class="a" style="left:373px;top:624px;width:106px;height:15px;background:#fff;overflow:hidden"><div class="t" style="left:3px;top:2.4px;font-size:12px;letter-spacing:-0.4px;color:#6d6d6d">Displacement</div></div>
<div class="a" style="left:480px;top:624px;width:119px;height:15px;background:#fff;overflow:hidden"><div class="t" style="left:4px;top:2px;font-size:12px;letter-spacing:0.1px;font-weight:bold;color:#6d6d6d">0</div></div>
<div class="a" style="left:373px;top:639px;width:226px;height:1px;background:#d0d0d0"></div>
<div class="a" style="left:479px;top:624px;width:1px;height:16px;background:#d0d0d0"></div>
<div class="a" style="left:373px;top:640px;width:106px;height:15px;background:#fff;overflow:hidden"><div class="t" style="left:3px;top:2.4px;font-size:12px;letter-spacing:-0.4px;color:#6d6d6d">Display in Data Box</div></div>
<div class="a" style="left:480px;top:640px;width:119px;height:15px;background:#fff;overflow:hidden"><div class="t" style="left:4px;top:2px;font-size:12px;letter-spacing:0.1px;font-weight:bold;color:#6d6d6d">True</div></div>
<div class="a" style="left:373px;top:655px;width:226px;height:1px;background:#d0d0d0"></div>
<div class="a" style="left:479px;top:640px;width:1px;height:16px;background:#d0d0d0"></div>
<div class="a" style="left:373px;top:656px;width:106px;height:15px;background:#c4c4c4;overflow:hidden"><div class="t" style="left:3px;top:2.4px;font-size:12px;letter-spacing:-0.4px;color:#6d6d6d">Label</div></div>
<div class="a" style="left:480px;top:656px;width:119px;height:15px;background:#fff;overflow:hidden"><div class="t" style="left:4px;top:2px;font-size:12px;letter-spacing:0.1px;font-weight:bold;color:#6d6d6d">GZT_Fractal_Converter_RV2</div></div>
<div class="a" style="left:373px;top:671px;width:226px;height:1px;background:#d0d0d0"></div>
<div class="a" style="left:479px;top:656px;width:1px;height:16px;background:#d0d0d0"></div>
<div class="a" style="left:373px;top:672px;width:106px;height:15px;background:#fff;overflow:hidden"><div class="t" style="left:3px;top:2.4px;font-size:12px;letter-spacing:-0.4px;color:#6d6d6d">Panel</div></div>
<div class="a" style="left:480px;top:672px;width:119px;height:15px;background:#fff;overflow:hidden"><div class="t" style="left:4px;top:2px;font-size:12px;letter-spacing:0.1px;font-weight:bold;color:#6d6d6d">1</div></div>
<div class="a" style="left:373px;top:687px;width:226px;height:1px;background:#d0d0d0"></div>
<div class="a" style="left:479px;top:672px;width:1px;height:16px;background:#d0d0d0"></div>
<div class="a" style="left:373px;top:688px;width:106px;height:15px;background:#fff;overflow:hidden"><div class="t" style="left:3px;top:2.4px;font-size:12px;letter-spacing:-0.4px;color:#6d6d6d">Price marker(s)</div></div>
<div class="a" style="left:480px;top:688px;width:119px;height:15px;background:#fff;overflow:hidden"><div class="t" style="left:4px;top:2px;font-size:12px;letter-spacing:0.1px;font-weight:bold;color:#6d6d6d">True</div></div>
<div class="a" style="left:373px;top:703px;width:226px;height:1px;background:#d0d0d0"></div>
<div class="a" style="left:479px;top:688px;width:1px;height:16px;background:#d0d0d0"></div>
<div class="a" style="left:373px;top:704px;width:106px;height:14px;background:#fff;overflow:hidden"><div class="t" style="left:3px;top:2.4px;font-size:12px;letter-spacing:-0.4px;color:#6d6d6d">Scale justification</div></div>
<div class="a" style="left:480px;top:704px;width:119px;height:14px;background:#fff;overflow:hidden"><div class="t" style="left:4px;top:2px;font-size:12px;letter-spacing:0.1px;font-weight:bold;color:#6d6d6d">Overlay</div></div>
<div class="a" style="left:479px;top:704px;width:1px;height:14px;background:#d0d0d0"></div>
<svg class="a" style="left:603px;top:404px" width="9" height="6"><path d="M0.8 5L4.5 1.3L8.2 5" stroke="#c0c0c0" stroke-width="1.4" fill="none"/></svg>
<svg class="a" style="left:603px;top:707px" width="9" height="6"><path d="M0.8 1L4.5 4.7L8.2 1" stroke="#c0c0c0" stroke-width="1.4" fill="none"/></svg>
<div class="a" style="left:358px;top:722px;width:259px;height:59px;background:#f0f0f0;border:1px solid #a0a0a0"></div>
<div class="t" style="left:363px;top:726px;font-size:12px;font-weight:bold;color:#000">Label</div>
<div class="t" style="left:363px;top:740px;font-size:11px;color:#000">GZT Fractal Converter for Volume and Equal</div>
<div class="t" style="left:363px;top:753px;font-size:11px;color:#000">Range Charts</div>
<div class="a" style="left:615px;top:838px;width:2px;height:2px;background:#b8b8b8"></div>
<div class="a" style="left:612px;top:841px;width:2px;height:2px;background:#b8b8b8"></div>
<div class="a" style="left:615px;top:841px;width:2px;height:2px;background:#b8b8b8"></div>
<div class="a" style="left:609px;top:844px;width:2px;height:2px;background:#b8b8b8"></div>
<div class="a" style="left:612px;top:844px;width:2px;height:2px;background:#b8b8b8"></div>
<div class="a" style="left:615px;top:844px;width:2px;height:2px;background:#b8b8b8"></div></body></html>
